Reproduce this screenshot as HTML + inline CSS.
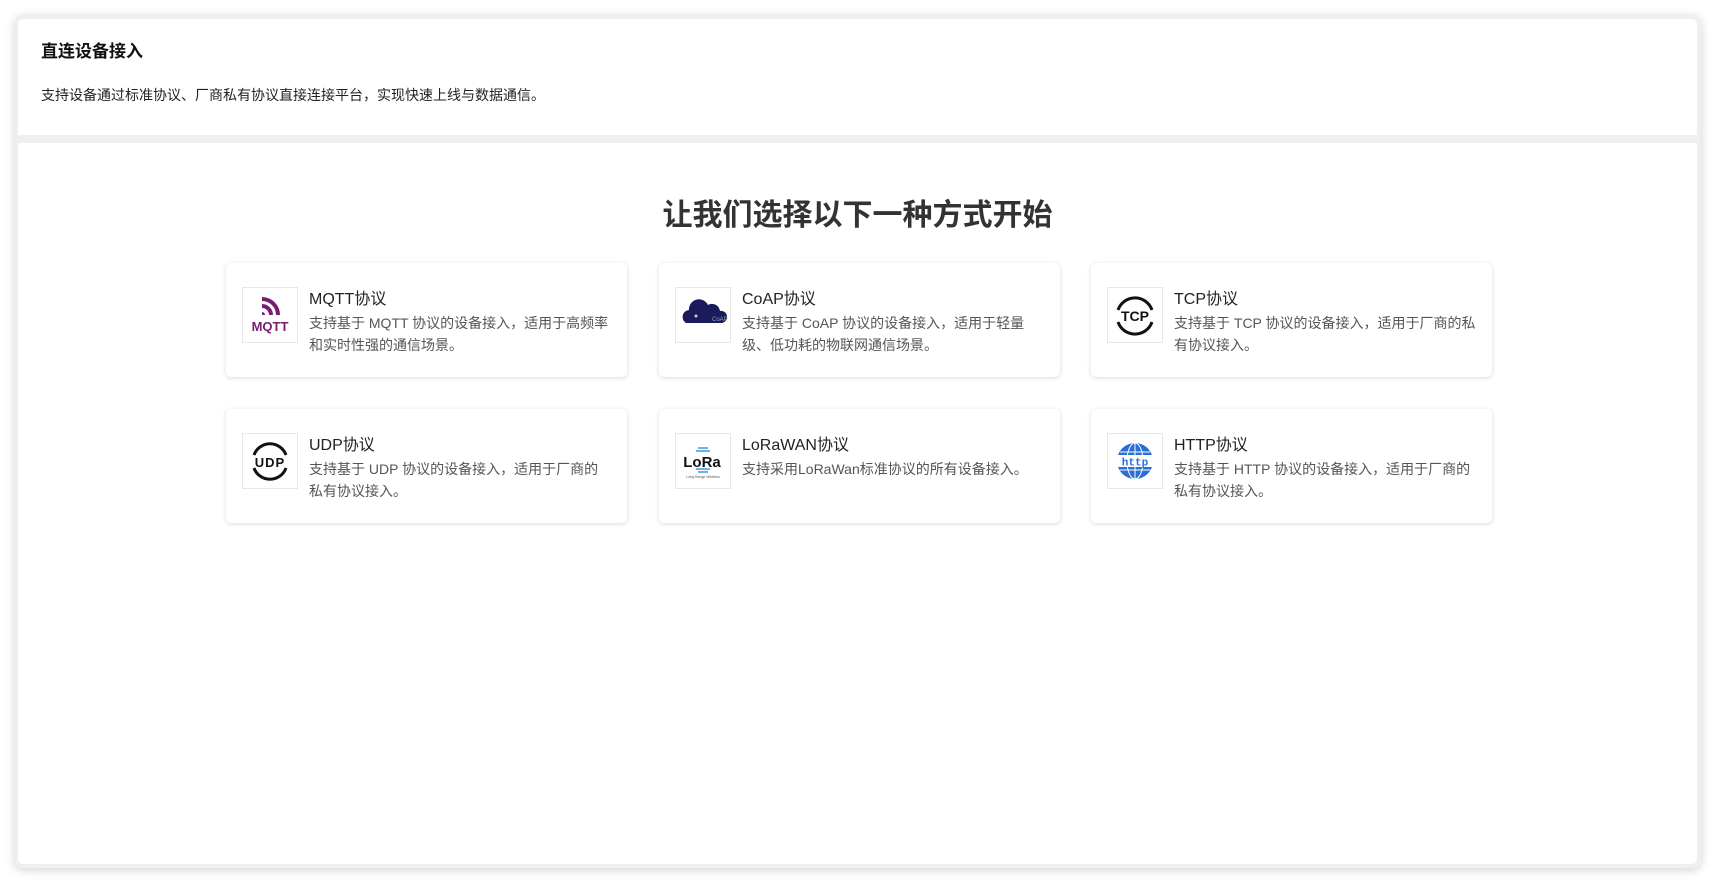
<!DOCTYPE html>
<html><head><meta charset="utf-8"><style>
*{margin:0;padding:0;box-sizing:border-box}
body{width:1716px;height:883px;background:#fff;font-family:"Liberation Sans","Noto Sans CJK SC",sans-serif;overflow:hidden;position:relative}
.frame{position:absolute;left:15px;top:15px;width:1686px;height:853px;background:#efefef;border-radius:8px;box-shadow:0 2px 10px rgba(0,0,0,.18);padding:4px 4px 4px 3px}
.head{background:#fff;height:116px;padding:22px 23px;border-radius:5px 5px 0 0}
.head h1{font-size:17px;font-weight:bold;color:#111;line-height:22px}
.head p{font-size:14px;color:#222;margin-top:22px}
.main{background:#fff;margin-top:8px;height:721px;border-radius:0 0 5px 5px;position:relative}
.main h2{position:absolute;left:0;right:0;top:47px;text-align:center;font-size:30px;font-weight:bold;color:#333}
.card{position:absolute;width:401px;height:114px;background:#fff;border-radius:5px;box-shadow:0 1px 5px rgba(0,0,0,.15);padding:24px 16px}
.ic{position:absolute;left:16px;top:24px;width:56px;height:56px;border:1px solid #e8e8e8;display:flex;align-items:center;justify-content:center}
.tx{position:absolute;left:83px;top:27px;right:16px}
.tx b{display:block;font-weight:normal;font-size:16px;color:#222;line-height:20px}
.tx span{display:block;font-size:14px;color:#555;line-height:22px;margin-top:2px}
</style></head><body>
<div class="frame">
<div class="head"><h1>直连设备接入</h1><p>支持设备通过标准协议、厂商私有协议直接连接平台，实现快速上线与数据通信。</p></div>
<div class="main">
<h2>让我们选择以下一种方式开始</h2>

<div class="card" style="left:208px;top:120px">
<div class="ic"><svg width="50" height="50" viewBox="0 0 50 50"><path d="M17 9 a16 16 0 0 1 16 16" stroke="#7a1c72" stroke-width="4" fill="none"/><path d="M17 16 a9 9 0 0 1 9 9" stroke="#7a1c72" stroke-width="4" fill="none"/><path d="M17 22 a3 3 0 0 1 3 3 h-3z" fill="#7a1c72"/><text x="25" y="41" text-anchor="middle" font-size="13" font-weight="bold" fill="#7a1c72" font-family="Liberation Sans">MQTT</text></svg></div>
<div class="tx"><b>MQTT协议</b><span>支持基于 MQTT 协议的设备接入，适用于高频率和实时性强的通信场景。</span></div></div>

<div class="card" style="left:641px;top:120px">
<div class="ic"><svg width="50" height="50" viewBox="0 0 50 50"><path d="M8 33 a7 7 0 0 1 3-13 a10 10 0 0 1 19-5 a8 8 0 0 1 12 6 a6 6 0 0 1 2 12z" fill="#1b1a5c"/><text x="34" y="31" font-size="6" fill="#8aa" font-family="Liberation Sans">CoAP</text><circle cx="18" cy="26" r="1.5" fill="#ccc"/></svg></div>
<div class="tx"><b>CoAP协议</b><span>支持基于 CoAP 协议的设备接入，适用于轻量级、低功耗的物联网通信场景。</span></div></div>

<div class="card" style="left:1073px;top:120px">
<div class="ic"><svg width="50" height="50" viewBox="0 0 50 50"><path d="M8 20 a18 18 0 0 1 34 0" stroke="#111" stroke-width="3" fill="none"/><path d="M8 32 a18 18 0 0 0 34 0" stroke="#111" stroke-width="3" fill="none"/><text x="25" y="31" text-anchor="middle" font-size="14" font-weight="bold" fill="#111" font-family="Liberation Sans">TCP</text></svg></div>
<div class="tx"><b>TCP协议</b><span>支持基于 TCP 协议的设备接入，适用于厂商的私有协议接入。</span></div></div>

<div class="card" style="left:208px;top:266px">
<div class="ic"><svg width="50" height="50" viewBox="0 0 50 50"><path d="M9 19 a17 17 0 0 1 32 0" stroke="#111" stroke-width="3" fill="none"/><path d="M9 32 a17 17 0 0 0 32 0" stroke="#111" stroke-width="3" fill="none"/><text x="25" y="31" text-anchor="middle" font-size="13" font-weight="bold" fill="#111" font-family="Liberation Sans" letter-spacing="1">UDP</text></svg></div>
<div class="tx"><b>UDP协议</b><span>支持基于 UDP 协议的设备接入，适用于厂商的私有协议接入。</span></div></div>

<div class="card" style="left:641px;top:266px">
<div class="ic"><svg width="50" height="50" viewBox="0 0 50 50"><path d="M20 12 h10 M18 15 h14 M18 33 h14 M20 36 h10" stroke="#3a9be0" stroke-width="1.5"/><text x="24" y="31" text-anchor="middle" font-size="15" font-weight="bold" fill="#111" font-family="Liberation Sans">LoRa</text><text x="25" y="42" text-anchor="middle" font-size="3.5" fill="#555" font-family="Liberation Sans">Long Range Wireless</text></svg></div>
<div class="tx"><b>LoRaWAN协议</b><span>支持采用LoRaWan标准协议的所有设备接入。</span></div></div>

<div class="card" style="left:1073px;top:266px">
<div class="ic"><svg width="50" height="50" viewBox="0 0 50 50"><circle cx="25" cy="25" r="18" fill="#2a6fd6"/><path d="M7 25h36M25 7v36M10 16h30M10 34h30" stroke="#fff" stroke-width="1"/><ellipse cx="25" cy="25" rx="8" ry="18" stroke="#fff" fill="none"/><rect x="5" y="19" width="40" height="12" fill="#fff"/><text x="25" y="29.5" text-anchor="middle" font-size="11" font-weight="bold" fill="#2a6fd6" font-family="Liberation Mono">http</text></svg></div>
<div class="tx"><b>HTTP协议</b><span>支持基于 HTTP 协议的设备接入，适用于厂商的私有协议接入。</span></div></div>

</div></div>
</body></html>
